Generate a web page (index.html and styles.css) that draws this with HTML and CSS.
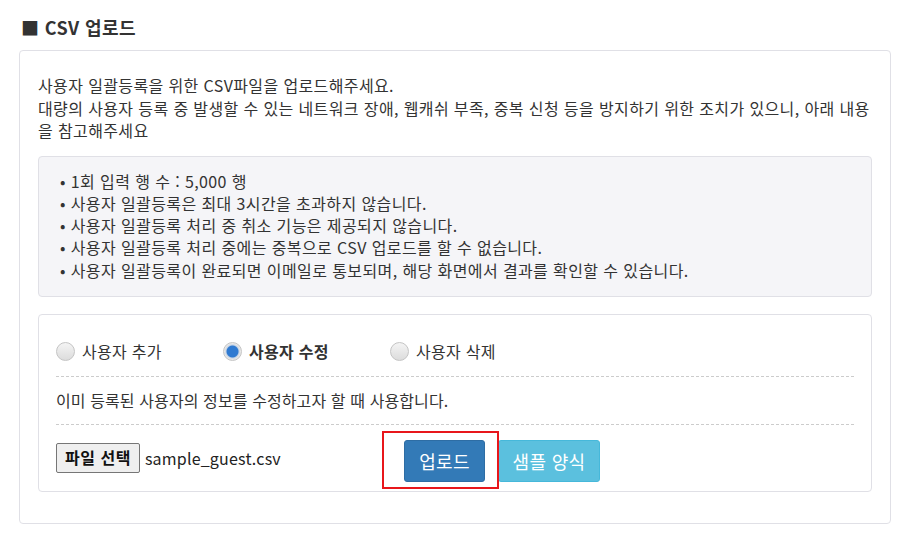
FILE: index.html
```html
<!DOCTYPE html>
<html lang="ko">
<head>
<meta charset="utf-8">
<link rel="stylesheet" href="styles.css">
</head>
<body>
<h2 class="title">■ CSV 업로드</h2>
<div class="card">
  <p class="desc">사용자 일괄등록을 위한 CSV파일을 업로드해주세요.<br>대량의 사용자 등록 중 발생할 수 있는 네트워크 장애, 웹캐쉬 부족, 중복 신청 등을 방지하기 위한 조치가 있으니, 아래 내용<br>을 참고해주세요</p>
  <div class="notice">
    <ul>
      <li>1회 입력 행 수 : 5,000 행</li>
      <li>사용자 일괄등록은 최대 3시간을 초과하지 않습니다.</li>
      <li>사용자 일괄등록 처리 중 취소 기능은 제공되지 않습니다.</li>
      <li>사용자 일괄등록 처리 중에는 중복으로 CSV 업로드를 할 수 없습니다.</li>
      <li>사용자 일괄등록이 완료되면 이메일로 통보되며, 해당 화면에서 결과를 확인할 수 있습니다.</li>
    </ul>
  </div>
  <div class="panel">
    <div class="radios">
      <label class="radio r1"><span class="dot"></span>사용자 추가</label>
      <label class="radio r2 checked"><span class="dot"></span>사용자 수정</label>
      <label class="radio r3"><span class="dot"></span>사용자 삭제</label>
    </div>
    <div class="info">이미 등록된 사용자의 정보를 수정하고자 할 때 사용합니다.</div>
    <div class="actions">
      <div class="file"><span class="file-btn">파일 선택</span><span class="file-name">sample_guest.csv</span></div>
      <div class="upload-wrap"><span class="btn btn-primary">업로드</span><span class="highlight"></span></div>
      <span class="btn btn-info">샘플 양식</span>
    </div>
  </div>
</div>
</body>
</html>
```

FILE: styles.css
```css
* { box-sizing: border-box; }
html, body { margin: 0; padding: 0; background: #fff; }
body {
  font-family: "Noto Sans CJK KR", "Noto Sans", sans-serif;
  color: #333;
  font-size: 16px;
  letter-spacing: 0.3px;
  padding: 0 10px 0 19px;
  width: 900px;
}
.title {
  margin: 0;
  padding: 13px 0 0 2px;
  height: 50px;
  font-size: 18px;
  font-weight: bold;
  line-height: 28px;
  letter-spacing: 0.4px;
  color: #333;
}
.card {
  width: 872px;
  height: 474px;
  border: 1px solid #e0e0e6;
  border-radius: 4px;
  padding: 23px 18px 0 18px;
}
.desc {
  margin: 0;
  line-height: 22.5px;
  letter-spacing: 0.38px;
  white-space: nowrap;
}
.notice {
  margin-top: 14px;
  height: 141px;
  background: #f5f5f8;
  border: 1px solid #e0e0e6;
  border-radius: 4px;
  padding: 13px 0 0 21px;
}
.notice ul { margin: 0; padding: 0; list-style: none; }
.notice li { line-height: 22.3px; letter-spacing: 0.4px; }
.notice li::before { content: "• "; }
.panel {
  margin-top: 17px;
  height: 178px;
  border: 1px solid #e0e0e6;
  border-radius: 4px;
  padding: 0 17px;
}
.radios {
  display: flex;
  height: 62px;
  align-items: center;
  padding-top: 12px;
  border-bottom: 1px dashed #ccc;
}
.radio { display: flex; align-items: center; }
.r1 { width: 167px; }
.r2 { width: 167px; font-weight: bold; }
.dot {
  width: 19px; height: 19px;
  border-radius: 50%;
  border: 1px solid #c4c4c4;
  background: linear-gradient(#f4f4f4, #dcdcdc);
  margin-right: 7px;
  flex: none;
}
.checked .dot {
  background: radial-gradient(circle, #2f7ad1 0 5.5px, #c9d6e6 6.5px, #e8e8e8 8px);
}
.info {
  height: 48px;
  line-height: 46px;
  letter-spacing: 0.1px;
  border-bottom: 1px dashed #ccc;
}
.actions {
  display: flex;
  align-items: center;
  height: 66px;
}
.file { display: flex; align-items: center; width: 348px; }
.file-btn {
  display: inline-block;
  height: 30px;
  line-height: 27px;
  padding: 0 8px;
  border: 1px solid #767676;
  border-radius: 2px;
  background: #efefef;
  font-weight: bold;
  color: #111;
  font-size: 16px;
  letter-spacing: 0.5px;
}
.file-name { margin-left: 5px; color: #222; letter-spacing: 0.2px; }
.upload-wrap { position: relative; margin-top: 6px; }
.btn {
  display: inline-block;
  height: 42px;
  line-height: 40px;
  text-align: center;
  color: #fff;
  font-size: 18px;
  letter-spacing: 0.3px;
  border-radius: 3px;
}
.btn-primary { width: 81px; background: #337ab7; border: 1px solid #2e6da4; }
.btn-info { width: 102px; margin-left: 13px; margin-top: 6px; background: #5bc0de; border: 1px solid #46b8da; }
.highlight {
  position: absolute;
  left: -22px; top: -9px;
  width: 117px; height: 58px;
  border: 2px solid #e8161b;
  pointer-events: none;
}
```
